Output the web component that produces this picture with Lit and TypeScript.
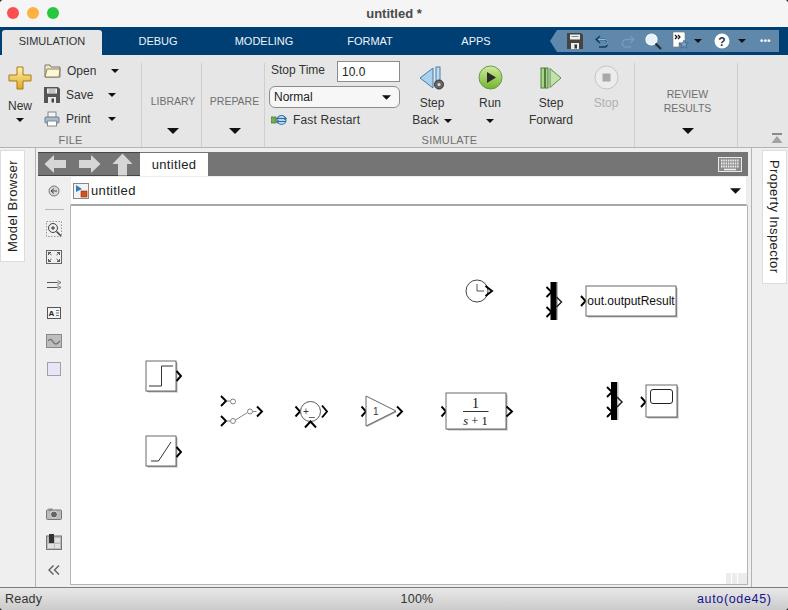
import { LitElement, html, css, svg } from 'lit';
import { customElement } from 'lit/decorators.js';

const caret = (w = 9) => html`<svg class="caret" width=${w} height=${Math.ceil(w / 2)} viewBox="0 0 10 5"><path d="M0 0h10L5 5z" fill="#111" /></svg>`;

// port chevron, tip at x,y
const chev = (x: number, y: number, w = 5, h = 5) =>
  svg`<path d="M${x - w} ${y - h}L${x} ${y}L${x - w} ${y + h}" fill="none" stroke="#000" stroke-width="1.9" />`;

const block = (x: number, y: number, w: number, h: number) => svg`
  <rect x=${x + 2} y=${y + 2} width=${w} height=${h} fill="#dcdcdc" />
  <rect x=${x + 1} y=${y + 1} width=${w} height=${h} fill="#999" />
  <rect x=${x} y=${y} width=${w} height=${h} fill="#fff" stroke="#6a6a6a" />`;

const mux = (x: number, y: number) => svg`
  <rect x=${x + 1.5} y=${y} width="6" height="38" fill="#bbb" />
  <rect x=${x} y=${y} width="6" height="38" fill="#000" />
  ${chev(x + 1, y + 10)}${chev(x + 1, y + 30)}
  <path d="M${x + 6} ${y + 15}L${x + 11} ${y + 20}L${x + 6} ${y + 25}" fill="none" stroke="#222" stroke-width="1.5" />`;

const diagram = svg`
  <!-- step -->
  ${block(146, 361, 30, 30)}
  <path d="M149 386h12.5v-20H173" fill="none" stroke="#333" />
  ${chev(181, 376, 4.5)}
  <!-- ramp -->
  ${block(146, 436, 30, 30)}
  <path d="M151 461h7.5L171 442" fill="none" stroke="#333" />
  ${chev(181, 452, 4.5)}
  <!-- switch -->
  ${chev(226, 401)}${chev(226, 421)}
  <g fill="#fff" stroke="#666" stroke-width=".8">
    <path d="M226 401h4.5M226 421h4.5M235.500 420L247.500 412.500M252.500 411.500h4" fill="none" />
    <circle cx="233" cy="401.500" r="2.500" /><circle cx="233" cy="421" r="2.500" /><circle cx="250" cy="411.500" r="2.500" />
  </g>
  ${chev(262, 411.5)}
  <!-- sum -->
  ${chev(300, 411.5, 4.5)}
  <circle cx="310.500" cy="411.500" r="10" fill="#fff" stroke="#555" />
  <text x="303" y="415" class="sm">+</text>
  <text x="309" y="416" class="sm">_</text>
  <path d="M305 427.500L310.500 421.500L316 427.500" fill="none" stroke="#000" stroke-width="1.9" />
  ${chev(327, 411.5, 5, 6)}
  <!-- gain -->
  ${chev(366, 411.5, 4.5)}
  <path d="M367 397V427L397 412z" fill="#a8a8a8" />
  <path d="M366 396V426L396 411z" fill="#fff" stroke="#666" />
  <text x="373" y="415" class="sm">1</text>
  ${chev(402, 411.5)}
  <!-- transfer fcn -->
  ${chev(446, 411.5, 4.5)}
  ${block(446, 393, 60, 36)}
  <path d="M463 411.500h25.500" stroke="#333" />
  <text x="475.500" y="408" class="math big" text-anchor="middle">1</text>
  <text x="475.500" y="425" class="math" text-anchor="middle"><tspan font-style="italic">s</tspan> + 1</text>
  ${chev(512, 411.5, 5.5)}
  <!-- clock -->
  <circle cx="477" cy="291" r="11" fill="#fff" stroke="#444" />
  <path d="M477 284v7h7" fill="none" stroke="#555" />
  ${chev(492, 291, 6.5)}
  ${mux(550.5, 282)}
  <!-- to workspace -->
  ${chev(585.5, 301, 4.5)}
  ${block(586, 286, 90, 30)}
  <text x="631" y="305" class="block-text" text-anchor="middle">out.outputResult</text>
  ${mux(611, 382)}
  <!-- scope -->
  ${chev(645.5, 402, 4.5)}
  ${block(646, 385, 31, 32)}
  <rect x="650.500" y="389.500" width="22" height="14" rx="2.500" fill="#fff" stroke="#222" />
`;

const icons = {
  plus: html`<svg width="24" height="24" viewBox="0 0 24 24"><defs><linearGradient id="gy" x1="0" y1="0" x2="0" y2="1"><stop offset="0" stop-color="#fff3b0" /><stop offset="1" stop-color="#e0a820" /></linearGradient></defs><path d="M9 1h6v8h8v6h-8v8H9v-8H1V9h8z" fill="url(#gy)" stroke="#a67c14" /></svg>`,
  folder: html`<svg width="17" height="14" viewBox="0 0 17 14"><path d="M1 1h5l1 2h9v10H1z" fill="#f6e9b8" stroke="#777" /><path d="M3 5h13l-1 8H1z" fill="#fdf6d8" stroke="#8a8058" /></svg>`,
  floppy: html`<svg width="16" height="16" viewBox="0 0 16 16"><path d="M0 0h14l2 2v14H0z" fill="#555" /><rect x="3" y="1.500" width="10" height="5" fill="#eee" /><path d="M4.500 3h7M4.500 5h7" stroke="#999" /><rect x="4" y="10" width="8" height="6" fill="#e8e8e8" /><rect x="7.500" y="11.500" width="2.500" height="4" fill="#444" /></svg>`,
  printer: html`<svg width="16" height="16" viewBox="0 0 16 16"><rect x="4" y="1" width="8" height="6" fill="#f4f4f4" stroke="#888" /><rect x="1" y="6" width="14" height="6" rx="1" fill="#a9bccb" stroke="#6a7c8c" /><rect x="3.500" y="10" width="9" height="5" fill="#fff" stroke="#888" /></svg>`,
  fast: html`<svg width="17" height="12" viewBox="0 0 17 12"><rect x="0" y="3" width="5" height="6" fill="#74ad52" stroke="#4d7a36" stroke-width=".8" /><circle cx="10.500" cy="6" r="4.500" fill="#b8d4ea" stroke="#3a78ad" stroke-width="1.200" /><path d="M5 4.500h10M15 7.500H6" stroke="#2f6ea3" stroke-width="1.200" /><path d="M13 2.500l2.500 2-2.500 1M8 6.500l-2.500 1.500 2.500 1.500" fill="none" stroke="#2f6ea3" /></svg>`,
  stepBack: html`<svg width="26" height="24" viewBox="0 0 26 24"><path d="M14 2L1 12l13 10z" fill="#a9d0ec" stroke="#4a7da8" /><rect x="17" y="1" width="4" height="18" fill="#bcdcf2" stroke="#4a7da8" /><circle cx="20" cy="18.500" r="4.500" fill="#666" stroke="#333" /><circle cx="20" cy="18.500" r="1.500" fill="#ddd" /></svg>`,
  run: html`<svg width="25" height="25" viewBox="0 0 25 25"><defs><linearGradient id="gr" x1="0" y1="0" x2="0" y2="1"><stop offset="0" stop-color="#d3ea9e" /><stop offset="1" stop-color="#6fb52c" /></linearGradient></defs><circle cx="12.500" cy="12.500" r="11.500" fill="url(#gr)" stroke="#6e9a48" /><path d="M9 7l9 5.500L9 18z" fill="#2a2a2a" /></svg>`,
  stepForward: html`<svg width="22" height="22" viewBox="0 0 22 22"><rect x="1" y="1" width="3.500" height="20" fill="#a8d58a" stroke="#4f7f3a" /><rect x="5.500" y="1" width="2.500" height="20" fill="#a8d58a" stroke="#4f7f3a" /><path d="M10 1.500L21 11 10 20.500z" fill="#c0e3a8" stroke="#5f8f4a" /></svg>`,
  stop: html`<svg width="25" height="25" viewBox="0 0 25 25"><circle cx="12.500" cy="12.500" r="11.500" fill="#ececec" stroke="#c4c4c4" /><rect x="8.500" y="8.500" width="8" height="8" fill="#a8a8a8" /></svg>`,
  collapse: html`<svg width="12" height="11" viewBox="0 0 12 11"><rect x="1" y="0" width="10" height="2" fill="#8a8a8a" /><path d="M6 3l5.500 7H.5z" fill="#a2a2a2" /></svg>`,
  qSave: html`<svg width="16" height="16" viewBox="0 0 16 16"><path d="M0 0h14l2 2v14H0z" fill="#444" /><rect x="3" y="1.500" width="10" height="5" fill="#eee" /><path d="M4.500 3.500h7" stroke="#888" /><rect x="4" y="10" width="8" height="6" fill="#ececec" /><rect x="7.500" y="11.500" width="2.500" height="4" fill="#333" /></svg>`,
  undo: html`<svg width="15" height="13" viewBox="0 0 15 13"><path d="M5 1L1 4.500 5 8M1.500 4.500H10a4 4 0 0 1 0 7.500H4" fill="none" stroke="#123c66" stroke-width="1.400" /><path d="M3 4.500H10a3 3 0 0 1 1.500 5.500" fill="none" stroke="#b8d8f0" stroke-width=".8" /></svg>`,
  redo: html`<svg width="15" height="13" viewBox="0 0 15 13"><path d="M10 1l4 3.500L10 8M13.500 4.500H5a4 4 0 0 0 0 7.500h6" fill="none" stroke="#7a9ab6" stroke-width="1.400" /></svg>`,
  search: html`<svg width="17" height="17" viewBox="0 0 17 17"><circle cx="6.500" cy="6.500" r="5.500" fill="#e8f2fa" stroke="#fff" stroke-width="1.200" /><path d="M10.500 10.500L16 16" stroke="#1d2f3f" stroke-width="2.200" /></svg>`,
  favorite: html`<svg width="17" height="18" viewBox="0 0 17 18"><path d="M1 0h11l1 1v10H7v4H1z" fill="#fff" stroke="#777" stroke-width=".6" /><path d="M3 3l2 2-2 2M6 3l2 2-2 2" fill="none" stroke="#111" stroke-width="1.200" /><path d="M12 8l1.300 3h3l-2.400 2 1 3.200-2.900-1.900-2.900 1.900 1-3.200L7 11h3.500z" fill="#7ea0c4" stroke="#33597f" stroke-width=".6" /></svg>`,
  help: html`<svg width="16" height="16" viewBox="0 0 16 16"><circle cx="8" cy="8" r="7.500" fill="#fff" /><text x="8" y="12.500" text-anchor="middle" font-family="Liberation Sans" font-weight="700" font-size="12" fill="#2a3a4a">?</text></svg>`,
  backNav: html`<svg width="23" height="20" viewBox="0 0 23 20"><path d="M10 1L0.500 10 10 19v-5h12V6H10z" fill="#d6d6d6" /></svg>`,
  fwdNav: html`<svg width="23" height="20" viewBox="0 0 23 20"><path d="M13 1l9.500 9L13 19v-5H1V6h12z" fill="#d6d6d6" /></svg>`,
  upNav: html`<svg width="21" height="23" viewBox="0 0 21 23"><path d="M10.500 .5L20.500 11H15v11.500H6V11H.5z" fill="#d6d6d6" /></svg>`,
  keyboard: html`<svg width="24" height="15" viewBox="0 0 24 15"><rect x=".5" y=".5" width="23" height="14" fill="#8b8b8b" stroke="#e8e8e8" /><path d="M3 3.500h18M3 6.500h18M3 9.500h18" stroke="#eee" stroke-width="2" stroke-dasharray="1.500 .8" /><path d="M6 12.500h12" stroke="#eee" stroke-width="1.500" /></svg>`,
  model: html`<svg width="16" height="16" viewBox="0 0 16 16"><rect x=".5" y=".5" width="15" height="15" fill="#f2f2f2" stroke="#888" /><path d="M3 2l6 4-6 3z" fill="#2c7fc4" /><rect x="8" y="8" width="6" height="6" fill="#d8501e" stroke="#8a2c0c" stroke-width=".6" /></svg>`,
  navBack: html`<svg width="12" height="12" viewBox="0 0 12 12"><circle cx="6" cy="6" r="5" fill="#d8d8d8" stroke="#777" /><path d="M3 6h6M6 3.500L3 6l3 2.500" fill="none" stroke="#444" /></svg>`,
  zoom: html`<svg width="16" height="16" viewBox="0 0 16 16"><rect x=".5" y=".5" width="15" height="15" fill="none" stroke="#999" stroke-dasharray="1.500 1.500" /><circle cx="7" cy="7" r="4.500" fill="#eee" stroke="#444" /><path d="M5 7h4M7 5v4" stroke="#333" /><path d="M10.500 10.500L15 15" stroke="#444" stroke-width="1.600" /></svg>`,
  fit: html`<svg width="16" height="14" viewBox="0 0 16 14"><rect x=".5" y=".5" width="15" height="13" fill="#eee" stroke="#666" /><path d="M2.500 2.500l3 2.500M13.500 2.500l-3 2.500M2.500 11.500l3-2.500M13.500 11.500l-3-2.500M2.500 2.500h2.500M2.500 2.500v2.500M13.500 2.500h-2.500M13.500 2.500v2.500M2.500 11.500h2.500M2.500 11.500v-2.500M13.500 11.500h-2.500M13.500 11.500v-2.500" fill="none" stroke="#555" /></svg>`,
  arrows: html`<svg width="15" height="10" viewBox="0 0 15 10"><path d="M0 2.500h12M0 7.500h12" stroke="#555" /><path d="M10.500 .5l3.500 2-3.500 2M10.500 5.500l3.500 2-3.500 2" fill="#ccc" stroke="#666" stroke-width=".8" /></svg>`,
  note: html`<svg width="14" height="12" viewBox="0 0 14 12"><rect x=".5" y=".5" width="13" height="11" fill="#f4f4f4" stroke="#555" /><text x="4.500" y="9" text-anchor="middle" font-family="Liberation Sans" font-weight="700" font-size="8" fill="#222">A</text><path d="M9 3.500h3M9 6h3M9 8.500h3" stroke="#777" /></svg>`,
  image: html`<svg width="16" height="14" viewBox="0 0 16 14"><rect x=".5" y=".5" width="15" height="13" fill="#bdbdbd" stroke="#888" /><path d="M2 7c3-4 4 0 6 2s3 1 6-2" fill="none" stroke="#6d6d6d" stroke-width="1.200" /></svg>`,
  area: html`<svg width="14" height="14" viewBox="0 0 14 14"><rect x=".5" y=".5" width="13" height="13" fill="#e6e6f6" stroke="#a0a0a8" /></svg>`,
  camera: html`<svg width="16" height="12" viewBox="0 0 16 12"><rect x=".5" y="2" width="15" height="9.500" rx="1" fill="#bbb" stroke="#777" /><rect x="2.500" y=".5" width="4" height="2" fill="#888" /><circle cx="8" cy="6.500" r="3.500" fill="#666" stroke="#ddd" /></svg>`,
  layout: html`<svg width="16" height="16" viewBox="0 0 16 16"><rect x=".5" y="2" width="15" height="13.500" fill="#bbb" stroke="#777" /><rect x="3" y="0" width="5" height="9" fill="#333" /><rect x="9" y="4" width="5" height="4.500" fill="#e2e2e2" /><rect x="9" y="10" width="5" height="4" fill="#e2e2e2" /><rect x="2" y="10" width="6" height="4" fill="#e2e2e2" /></svg>`,
  chevrons: html`<svg width="12" height="10" viewBox="0 0 12 10"><path d="M5.500 .5L1 5l4.500 4.500M11 .5L6.500 5 11 9.500" fill="none" stroke="#666" stroke-width="1.500" /></svg>`,
};

@customElement('app-root')
export class AppRoot extends LitElement {
  static styles = css`
    :host {
      display: block;
      width: 788px;
      height: 610px;
      background: #2a2a2a;
      font-family: 'Liberation Sans', Arial, sans-serif;
      font-size: 12px;
      color: #333;
    }
    svg {
      display: block;
      flex: none;
    }
    .window {
      width: 788px;
      height: 610px;
      display: flex;
      flex-direction: column;
      border-radius: 4px;
      overflow: hidden;
      background: #efefef;
    }

    /* title bar */
    .titlebar {
      height: 27px;
      flex: none;
      background: #f5f5f5;
      display: flex;
      align-items: center;
      position: relative;
      justify-content: center;
      font-size: 13px;
      font-weight: 700;
      color: #4a4a4a;
      box-sizing: border-box;
    }
    .lights {
      position: absolute;
      left: 7px;
      top: 7px;
      display: flex;
      gap: 8px;
    }
    .lights i {
      width: 12px;
      height: 12px;
      border-radius: 50%;
    }
    .lights .red {
      background: #fc4f4f;
    }
    .lights .amber {
      background: #fdb141;
    }
    .lights .green {
      background: #27c840;
    }

    /* tab strip */
    .tabstrip {
      height: 28px;
      flex: none;
      background: #003f74;
      display: flex;
      box-sizing: border-box;
      padding: 3px 0 0 2px;
      position: relative;
    }
    .tab {
      width: 106px;
      height: 25px;
      line-height: 23px;
      text-align: center;
      font-size: 11px;
      color: #f0f4f8;
    }
    .tab.active {
      width: 100px;
      margin-right: 3px;
      background: #e6e6e6;
      color: #333;
      border-radius: 3px 3px 0 0;
    }
    .quick {
      margin-left: 28px;
      width: 222px;
      height: 22px;
      background: #5f88ab;
      display: flex;
      align-items: center;
      position: relative;
      gap: 10px;
    }
    .quick::before {
      content: '';
      position: absolute;
      left: -7px;
      top: 0;
      border-style: solid;
      border-width: 11px 7px 11px 0;
      border-color: transparent #5f88ab transparent transparent;
    }
    .quick .q-save {
      margin-left: 10px;
      margin-right: 2px;
    }
    .quick .q-tight {
      margin-left: -5px;
    }
    .quick .q-help {
      margin-left: 2px;
    }
    .quick .q-help-caret {
      margin-left: -2px;
    }
    .dots {
      color: #fff;
      font-size: 9px;
      font-weight: 700;
      letter-spacing: 0.5px;
      margin-left: 4px;
    }

    /* ribbon */
    .ribbon {
      height: 93px;
      flex: none;
      box-sizing: border-box;
      background: #e6e6e6;
      border-bottom: 1px solid #b4b4b4;
      display: flex;
      padding-top: 8px;
      position: relative;
    }
    .section {
      display: flex;
      flex-direction: column;
      box-sizing: border-box;
      border-right: 1px solid #cfcfcf;
      flex: none;
    }
    .section.file {
      width: 142px;
    }
    .section.library {
      width: 60px;
    }
    .section.prepare {
      width: 63px;
    }
    .section.simulate {
      width: 370px;
    }
    .section.review {
      width: 103px;
    }
    .section-body {
      flex: 1;
      display: flex;
    }
    .section-label {
      height: 15px;
      line-height: 16px;
      text-align: center;
      font-size: 11px;
      color: #6f6f6f;
      letter-spacing: 0.2px;
    }
    .new {
      width: 40px;
      display: flex;
      flex-direction: column;
      align-items: center;
      padding-top: 3px;
    }
    .new span {
      margin-top: 9px;
    }
    .new .caret {
      margin-top: 5px;
    }
    .btn .caret {
      margin-top: 7px;
    }
    .file-list {
      display: flex;
      flex-direction: column;
      padding-left: 4px;
      gap: 8px;
    }
    .file-row {
      display: flex;
      align-items: center;
      height: 16px;
      gap: 6px;
    }
    .file-row span {
      width: 38px;
    }
    .file-row span.narrow {
      width: 36px;
    }
    .dropdown-section {
      align-items: center;
      text-align: center;
      font-size: 10.500px;
      color: #6f6f6f;
      line-height: 14px;
      padding-left: 3px;
    }
    .dropdown-section .txt {
      height: 62px;
      display: flex;
      align-items: center;
      padding-top: 14px;
      box-sizing: border-box;
    }
    .dropdown-section .caret {
      margin-top: 3px;
    }
    .sim-form {
      width: 140px;
      padding-left: 5px;
      box-sizing: border-box;
      display: flex;
      flex-direction: column;
    }
    .stop-row {
      display: flex;
      align-items: center;
      height: 20px;
      margin-top: -2px;
    }
    .stop-row span {
      width: 66px;
      padding-left: 1px;
      margin-top: -3px;
      white-space: nowrap;
    }
    .stop-input {
      width: 63px;
      height: 21px;
      flex: none;
      box-sizing: border-box;
      background: #fff;
      border: 1px solid #8c8c8c;
      padding: 3px 0 0 4px;
      color: #222;
    }
    .mode-select {
      margin: 5px 0 0 -1px;
      width: 131px;
      height: 22px;
      box-sizing: border-box;
      border: 1px solid #8c8c8c;
      border-radius: 6px;
      background: #f7f7f7;
      display: flex;
      align-items: center;
      justify-content: space-between;
      padding: 0 8px 0 4px;
      color: #222;
    }
    .fast-row {
      display: flex;
      align-items: center;
      gap: 5px;
      margin: 5px 0 0 1px;
      letter-spacing: 0.15px;
    }
    .btn {
      width: 54px;
      display: flex;
      flex-direction: column;
      align-items: center;
      padding-top: 2px;
      line-height: 17px;
      text-align: center;
      color: #333;
    }
    .btn .ico {
      height: 25px;
      margin-bottom: 5px;
      display: flex;
      align-items: center;
      justify-content: center;
    }
    .btn.run {
      margin-left: 4px;
    }
    .btn.forward {
      margin-left: 7px;
    }
    .btn.off {
      margin-left: 1px;
      color: #b0b0b0;
    }
    .with-caret {
      display: flex;
      align-items: center;
      gap: 5px;
    }
    .with-caret .caret {
      margin-top: 0;
    }
    .collapse {
      position: absolute;
      right: 5px;
      bottom: 3px;
    }

    /* main area */
    .main {
      flex: 1;
      display: flex;
      min-height: 0;
      background: #efefef;
    }
    .left-dock {
      width: 36px;
      flex: none;
      box-sizing: border-box;
      border-right: 1px solid #b4b4b4;
      padding-top: 2px;
    }
    .right-dock {
      width: 37px;
      flex: none;
      box-sizing: border-box;
      border-left: 1px solid #b4b4b4;
      padding: 2px 1px 0 10px;
    }
    .dock-tab {
      background: #fff;
      border: 1px solid #dcdcdc;
      box-sizing: border-box;
      font-size: 13px;
      letter-spacing: 0.4px;
      color: #222;
      writing-mode: vertical-rl;
      display: flex;
      align-items: center;
      justify-content: center;
    }
    .dock-tab.model-browser {
      width: 25px;
      height: 112px;
      transform: rotate(180deg);
    }
    .dock-tab.property {
      width: 25px;
      height: 134px;
    }
    .editor {
      flex: 1;
      display: flex;
      flex-direction: column;
      padding: 4px 3px 2px 2px;
      min-width: 0;
    }
    .explorer {
      height: 24px;
      flex: none;
      background: #757575;
      display: flex;
      align-items: center;
    }
    .nav-group {
      width: 102px;
      height: 24px;
      box-sizing: border-box;
      border-top: 1px solid #444;
      border-bottom: 1px solid #444;
      display: flex;
      align-items: center;
      padding-left: 6px;
      gap: 11px;
    }
    .crumb {
      width: 68px;
      height: 23px;
      line-height: 23px;
      background: #fff;
      text-align: center;
      font-size: 13px;
      letter-spacing: 0.35px;
      color: #222;
      align-self: flex-end;
    }
    .keys {
      margin-left: auto;
      margin-right: 6px;
    }
    .editor-body {
      flex: 1;
      display: flex;
      min-height: 0;
    }
    .palette {
      width: 32px;
      flex: none;
      display: flex;
      flex-direction: column;
      align-items: center;
      padding: 5px 0 1px;
      box-sizing: border-box;
    }
    .palette .slot {
      height: 28px;
      display: flex;
      align-items: center;
      justify-content: center;
      flex: none;
    }
    .palette .slot.first {
      height: 20px;
    }
    .palette hr {
      width: 19px;
      margin: 8px 0 5px;
      border: 0;
      border-top: 1px solid #b8b8b8;
      flex: none;
    }
    .spacer {
      flex: 1;
    }
    .workspace {
      flex: 1;
      display: flex;
      flex-direction: column;
      min-width: 0;
    }
    .address {
      height: 30px;
      flex: none;
      box-sizing: border-box;
      background: #fff;
      border: 1px solid #ececec;
      border-width: 1px 2px 2px 1px;
      border-bottom: 2px solid #a8a8a8;
      display: flex;
      align-items: center;
      gap: 2px;
      padding: 0 3px 0 2px;
      font-size: 13px;
      letter-spacing: 0.35px;
      color: #222;
    }
    .address .caret {
      margin-left: auto;
      margin-right: 2px;
    }
    .canvas {
      flex: 1;
      background: #fff;
      border: 1px solid #b4b4b4;
      border-top: 0;
      position: relative;
      min-height: 0;
      overflow: hidden;
    }
    .canvas svg {
      position: absolute;
      left: 0;
      top: 0;
    }
    .sm {
      font: 10px 'Liberation Sans', sans-serif;
      fill: #333;
    }
    .math {
      font: 12.5px 'Liberation Serif', serif;
      fill: #111;
    }
    .math.big {
      font-size: 14px;
    }
    .block-text {
      font: 12px 'Liberation Sans', sans-serif;
      fill: #111;
    }
    .hatch {
      position: absolute;
      right: 0;
      bottom: 0;
      display: flex;
      gap: 1px;
    }
    .hatch i {
      width: 5px;
      height: 11px;
      background: #ececec;
    }
    .hatch i:last-child {
      width: 9px;
    }

    /* status bar */
    .status {
      height: 23px;
      flex: none;
      box-sizing: border-box;
      border-top: 1px solid #7c7c7c;
      background: linear-gradient(#e8e8e8, #cbcbcb);
      display: grid;
      grid-template-columns: 382px 60px 250px 1fr;
      align-items: center;
      padding-left: 5px;
      font-size: 12.500px;
      color: #333;
      letter-spacing: 0.2px;
    }
    .status .zoom {
      text-align: center;
    }
    .status .solver {
      grid-column: 4;
      color: #14148c;
      letter-spacing: 0.65px;
      white-space: nowrap;
    }
  `;

  render() {
    return html`
      <div class="window">
        <div class="titlebar">
          <div class="lights"><i class="red"></i><i class="amber"></i><i class="green"></i></div>
          untitled *
        </div>

        <div class="tabstrip">
          <div class="tab active">SIMULATION</div>
          <div class="tab">DEBUG</div>
          <div class="tab">MODELING</div>
          <div class="tab">FORMAT</div>
          <div class="tab">APPS</div>
          ${this.renderQuickAccess()}
        </div>

        ${this.renderRibbon()}

        <div class="main">
          <div class="left-dock"><div class="dock-tab model-browser">Model Browser</div></div>
          ${this.renderEditor()}
          <div class="right-dock"><div class="dock-tab property">Property Inspector</div></div>
        </div>

        <div class="status">
          <span>Ready</span>
          <span class="zoom">100%</span>
          <span class="solver">auto(ode45)</span>
        </div>
      </div>
    `;
  }

  renderQuickAccess() {
    return html`
      <div class="quick">
        <span class="q-save">${icons.qSave}</span>
        <span>${icons.undo}</span>
        <span>${icons.redo}</span>
        <span>${icons.search}</span>
        <span>${icons.favorite}</span>
        <span class="q-tight">${caret(8)}</span>
        <span class="q-help">${icons.help}</span>
        <span class="q-help-caret">${caret(8)}</span>
        <span class="dots">•••</span>
      </div>
    `;
  }

  renderRibbon() {
    return html`
      <div class="ribbon">
        <div class="section file">
          <div class="section-body">
            <div class="new">
              ${icons.plus}
              <span>New</span>
              ${caret(8)}
            </div>
            <div class="file-list">
              <div class="file-row">${icons.folder}<span>Open</span>${caret(8)}</div>
              <div class="file-row">${icons.floppy}<span class="narrow">Save</span>${caret(8)}</div>
              <div class="file-row">${icons.printer}<span class="narrow">Print</span>${caret(8)}</div>
            </div>
          </div>
          <div class="section-label">FILE</div>
        </div>
        <div class="section library dropdown-section">
          <div class="txt">LIBRARY</div>
          ${caret(12)}
        </div>
        <div class="section prepare dropdown-section">
          <div class="txt">PREPARE</div>
          ${caret(12)}
        </div>
        <div class="section simulate">
          <div class="section-body">
            <div class="sim-form">
              <div class="stop-row"><span>Stop Time</span><div class="stop-input">10.0</div></div>
              <div class="mode-select">Normal ${caret(9)}</div>
              <div class="fast-row">${icons.fast}Fast Restart</div>
            </div>
            <div class="btn">
              <div class="ico">${icons.stepBack}</div>
              Step
              <div class="with-caret">Back ${caret(8)}</div>
            </div>
            <div class="btn run">
              <div class="ico">${icons.run}</div>
              Run
              ${caret(8)}
            </div>
            <div class="btn forward">
              <div class="ico">${icons.stepForward}</div>
              Step<br />Forward
            </div>
            <div class="btn off">
              <div class="ico">${icons.stop}</div>
              Stop
            </div>
          </div>
          <div class="section-label">SIMULATE</div>
        </div>
        <div class="section review dropdown-section">
          <div class="txt">REVIEW<br />RESULTS</div>
          ${caret(12)}
        </div>
        <div class="collapse">${icons.collapse}</div>
      </div>
    `;
  }

  renderEditor() {
    return html`
      <div class="editor">
        <div class="explorer">
          <div class="nav-group">${icons.backNav}${icons.fwdNav}${icons.upNav}</div>
          <div class="crumb">untitled</div>
          <div class="keys">${icons.keyboard}</div>
        </div>
        <div class="editor-body">
          <div class="palette">
            <div class="slot first">${icons.navBack}</div>
            <hr />
            <div class="slot">${icons.zoom}</div>
            <div class="slot">${icons.fit}</div>
            <div class="slot">${icons.arrows}</div>
            <div class="slot">${icons.note}</div>
            <div class="slot">${icons.image}</div>
            <div class="slot">${icons.area}</div>
            <div class="spacer"></div>
            <div class="slot">${icons.camera}</div>
            <div class="slot">${icons.layout}</div>
            <div class="slot">${icons.chevrons}</div>
          </div>
          <div class="workspace">
            <div class="address">${icons.model}<span>untitled</span>${caret(11)}</div>
            <div class="canvas">
              <svg width="676" height="378" viewBox="71 206 676 378">${diagram}</svg>
              <div class="hatch"><i></i><i></i><i></i></div>
            </div>
          </div>
        </div>
      </div>
    `;
  }
}
